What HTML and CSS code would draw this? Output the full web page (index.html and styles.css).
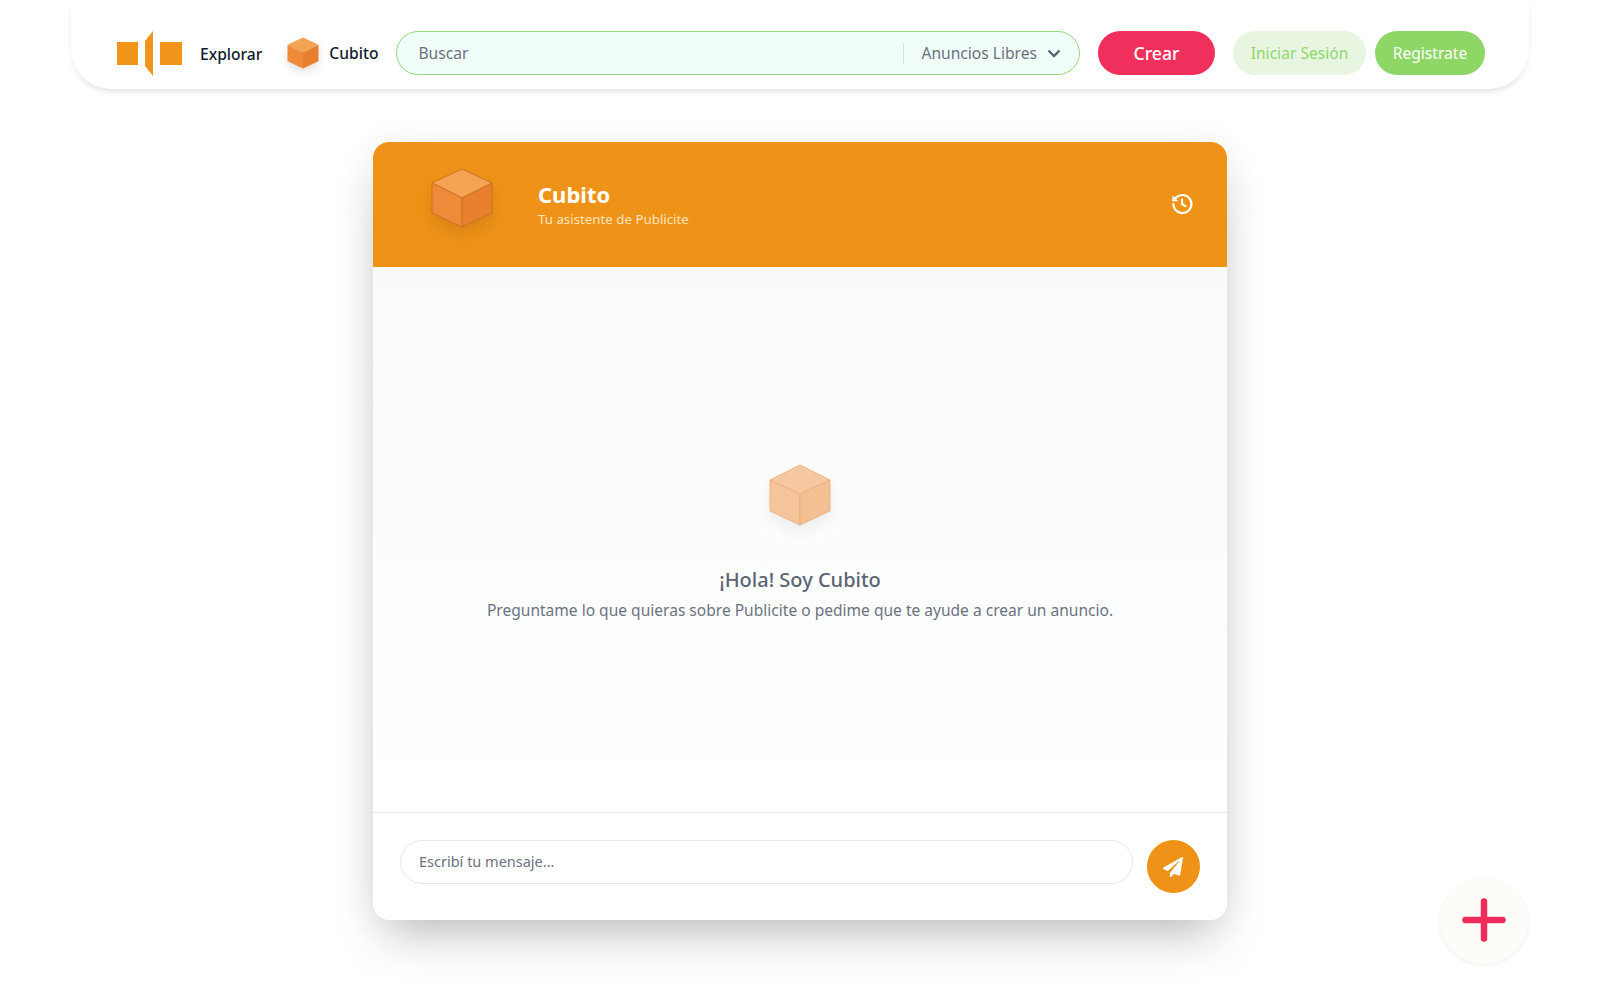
FILE: index.html
```html
<!DOCTYPE html>
<html lang="es">
<head>
    <meta charset="UTF-8">
    <meta name="viewport" content="width=device-width, initial-scale=1.0">
    <title>Cubito</title>
    <link rel="stylesheet" href="styles.css">
</head>
<body>
    <nav class="navbar">
        <svg class="logo" viewBox="0 0 65 45" aria-label="Publicite">
            <rect x="0" y="11" width="21" height="23"/>
            <polygon points="36,0 36,45 28,35 28,10"/>
            <rect x="43" y="11" width="22" height="23"/>
        </svg>
        <a class="nav-link explorar" href="#">Explorar</a>
        <a class="nav-link cubito-link" href="#">
            <svg class="cube cube-small" viewBox="0 0 62 62">
                <polygon class="cube-top" points="31,1 61,15 31,30 1,15"/>
                <polygon class="cube-left" points="1,15 31,30 31,61 1,47"/>
                <polygon class="cube-right" points="61,15 31,30 31,61 61,47"/>
            </svg>
            Cubito
        </a>
        <form class="search">
            <input class="search-input" type="text" placeholder="Buscar">
            <div class="search-filter">
                <span>Anuncios Libres</span>
                <svg class="chevron" viewBox="0 0 14 9"><path d="M1.5 1.5 7 7l5.5-5.5"/></svg>
            </div>
        </form>
        <button class="btn btn-crear">Crear</button>
        <button class="btn btn-login">Iniciar Sesión</button>
        <button class="btn btn-registro">Registrate</button>
    </nav>

    <main class="page">
        <section class="chat-card">
            <header class="chat-header">
                <svg class="cube cube-header" viewBox="0 0 62 60">
                    <polygon class="cube-top" points="31,1 61,15 31,30 1,15"/>
                    <polygon class="cube-left" points="1,15 31,30 31,59 1,45"/>
                    <polygon class="cube-right" points="61,15 31,30 31,59 61,45"/>
                </svg>
                <div class="chat-title">
                    <h1>Cubito</h1>
                    <p>Tu asistente de Publicite</p>
                </div>
                <svg class="history" viewBox="0 0 24 24">
                    <path d="M3.4 12a9 9 0 1 0 2.9-6.6L3.4 8"/>
                    <path class="arrow" d="M2.5 3.2v6h6z"/>
                    <path d="M12 7.5V12l3.5 2.2"/>
                </svg>
            </header>

            <div class="chat-body">
                <svg class="cube cube-empty" viewBox="0 0 62 62">
                    <polygon class="cube-top" points="31,1 61,16 31,30 1,16"/>
                    <polygon class="cube-left" points="1,16 31,30 31,61 1,47"/>
                    <polygon class="cube-right" points="61,16 31,30 31,61 61,47"/>
                </svg>
                <h2>¡Hola! Soy Cubito</h2>
                <p>Preguntame lo que quieras sobre Publicite o pedime que te ayude a crear un anuncio.</p>
            </div>

            <form class="chat-footer">
                <input class="chat-input" type="text" placeholder="Escribí tu mensaje...">
                <button class="send" type="button" aria-label="Enviar">
                    <svg viewBox="0 0 512 512"><path d="M476 3.2 12.5 270.6c-18.1 10.4-15.8 35.6 2.2 43.2L121 358.4l287.3-253.2c5.5-4.9 13.3 2.6 8.6 8.3L176 407v80.5c0 23.6 28.5 32.9 42.5 15.8L282 426l124.6 52.2c14.2 6 30.4-2.9 33-18.2l72-432C515 7.8 493.3-6.8 476 3.2z"/></svg>
                </button>
            </form>
        </section>
    </main>

    <button class="fab" aria-label="Crear">
        <svg viewBox="0 0 44 44"><path d="M22 3.5v37M3.5 22h37"/></svg>
    </button>
</body>
</html>
```

FILE: styles.css
```css
* {
    box-sizing: border-box;
}

html, body {
    height: 100%;
}

body {
    margin: 0;
    font-family: 'Noto Sans', sans-serif;
    background-color: #fff;
    overflow: hidden;
}

/* barra superior */
.navbar {
    display: flex;
    align-items: center;
    height: 89px;
    margin: 0 71px;
    padding: 31px 44px 14px 46px;
    background-color: #fff;
    border-radius: 0 0 40px 40px;
    box-shadow: 0 4px 6px -2px rgba(0, 0, 0, 0.13);
}

.logo {
    width: 65px;
    height: 45px;
    flex-shrink: 0;
    fill: #f0941a;
}

.nav-link {
    display: flex;
    align-items: center;
    color: #0f1c2e;
    font-size: 15.6px;
    font-weight: 500;
    text-decoration: none;
    white-space: nowrap;
}

.explorar {
    margin-left: 18px;
    margin-top: 2px;
}

.cubito-link {
    gap: 10px;
    margin-left: 25px;
}

.cube {
    flex-shrink: 0;
}

.cube-top {
    fill: #f4a354;
}

.cube-left {
    fill: #ee8b3a;
}

.cube-right {
    fill: #e87f2c;
}

.cube polygon {
    stroke: #cf711f;
    stroke-width: 1;
    stroke-linejoin: round;
}

.cube-small {
    width: 32px;
    height: 32px;
    filter: drop-shadow(0 4px 4px rgba(0, 0, 0, 0.12));
}

.cube-small polygon {
    stroke: none;
}

.search {
    display: flex;
    align-items: center;
    flex: 1;
    height: 44px;
    margin-left: 18px;
    padding: 0 18px 0 21px;
    background-color: #f0fdf8;
    border: 1.5px solid #94d97a;
    border-radius: 22px;
}

.search-input {
    flex: 1;
    min-width: 0;
    border: none;
    outline: none;
    padding: 0;
    background: transparent;
    font-family: inherit;
    font-size: 15.6px;
    color: #6b7280;
}

.search-input::placeholder {
    color: #6b7280;
    opacity: 1;
}

.search-filter {
    display: flex;
    align-items: center;
    gap: 10px;
    height: 21px;
    padding-left: 17px;
    border-left: 1px solid #cfe3cf;
    color: #6b7280;
    font-size: 15.6px;
    white-space: nowrap;
}

.chevron {
    width: 14px;
    height: 9px;
    fill: none;
    stroke: #5b6472;
    stroke-width: 2.4;
}

.btn {
    height: 44px;
    padding: 0;
    border: none;
    border-radius: 22px;
    font-family: inherit;
    font-size: 15.6px;
    font-weight: 400;
    white-space: nowrap;
    cursor: pointer;
}

.btn-crear {
    width: 117px;
    margin-left: 18px;
    background-color: #f12f5c;
    color: #fff;
    font-size: 17.6px;
    font-weight: 500;
}

.btn-login {
    width: 133px;
    margin-left: 18px;
    background-color: #e8f6e1;
    color: #8fd86b;
}

.btn-registro {
    width: 110px;
    margin-left: 9px;
    background-color: #8ed767;
    color: #fff;
}

/* tarjeta del chat */
.page {
    display: flex;
    justify-content: center;
    padding-top: 53px;
}

.chat-card {
    display: flex;
    flex-direction: column;
    width: 854px;
    height: 778px;
    background-color: #fff;
    border-radius: 16px;
    box-shadow: 0 25px 50px -12px rgba(0, 0, 0, 0.25), 0 0 40px rgba(0, 0, 0, 0.05);
    overflow: hidden;
}

.chat-header {
    display: flex;
    align-items: center;
    flex-shrink: 0;
    height: 125px;
    padding: 0 33px 0 58px;
    background-color: #ef9318;
    color: #fff;
}

.cube-header {
    width: 62px;
    height: 60px;
    margin-top: -14px;
    filter: drop-shadow(0 8px 8px rgba(0, 0, 0, 0.1));
}

.chat-title {
    flex: 1;
    margin-left: 45px;
}

.chat-title h1 {
    margin: 0;
    font-size: 22px;
    font-weight: 700;
    line-height: 26px;
}

.chat-title p {
    margin: 2px 0 0;
    font-size: 13.3px;
    line-height: 20px;
    color: #fde3bd;
}

.history {
    width: 24px;
    height: 24px;
    margin-top: -2px;
    fill: none;
    stroke: #fff;
    stroke-width: 2.2;
    stroke-linecap: round;
    stroke-linejoin: round;
}

.history .arrow {
    fill: #fff;
    stroke: none;
}

.chat-body {
    display: flex;
    flex-direction: column;
    align-items: center;
    justify-content: center;
    flex: 1;
    padding-top: 6px;
    background-image: linear-gradient(#f9fafb, #fff);
    text-align: center;
}

.cube-empty {
    width: 62px;
    height: 62px;
    filter: drop-shadow(0 8px 8px rgba(0, 0, 0, 0.06));
}

.cube-empty .cube-top {
    fill: #f6c8a2;
}

.cube-empty .cube-left {
    fill: #f5c49a;
}

.cube-empty .cube-right {
    fill: #f4bf92;
}

.cube-empty polygon {
    stroke: #ebb080;
}

.chat-body h2 {
    margin: 40px 0 0;
    font-size: 20px;
    font-weight: 500;
    line-height: 28px;
    color: #5b6472;
}

.chat-body p {
    margin: 4px 0 0;
    font-size: 15.55px;
    line-height: 24px;
    color: #6b7280;
}

.chat-footer {
    display: flex;
    align-items: flex-start;
    gap: 14px;
    flex-shrink: 0;
    padding: 27px 27px 27px;
    border-top: 1px solid #e9eaec;
}

.chat-input {
    flex: 1;
    height: 44px;
    padding: 0 18px 3px;
    background-color: #fff;
    border: 1px solid #e5e7eb;
    border-radius: 22px;
    outline: none;
    font-family: inherit;
    font-size: 14.5px;
    color: #6b7280;
}

.chat-input::placeholder {
    color: #6b7280;
    opacity: 1;
}

.send {
    display: flex;
    align-items: center;
    justify-content: center;
    width: 53px;
    height: 53px;
    padding: 0 1px 0 0;
    border: none;
    border-radius: 50%;
    background-color: #ef9318;
    cursor: pointer;
}

.send svg {
    width: 20px;
    height: 20px;
    fill: #fff;
}

/* boton flotante */
.fab {
    position: fixed;
    left: 1440px;
    top: 879px;
    display: flex;
    align-items: center;
    justify-content: center;
    width: 88px;
    height: 85px;
    padding: 0 0 3px;
    border: none;
    border-radius: 50%;
    background-color: #fdfcf8;
    box-shadow: 0 1px 4px rgba(0, 0, 0, 0.08);
    cursor: pointer;
}

.fab svg {
    width: 44px;
    height: 44px;
    fill: none;
    stroke: #ee2c5c;
    stroke-width: 6.5;
    stroke-linecap: round;
}
```
